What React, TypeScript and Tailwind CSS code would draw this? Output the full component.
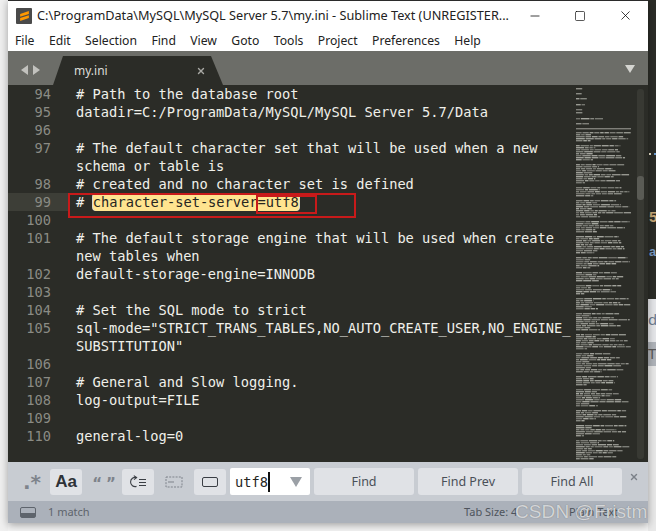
import { Minus, Square, X } from "lucide-react";

const MONO = "font-['DejaVu_Sans_Mono',monospace]";

const lines: { n?: number; text: string }[] = [
  { n: 94, text: "# Path to the database root" },
  { n: 95, text: "datadir=C:/ProgramData/MySQL/MySQL Server 5.7/Data" },
  { n: 96, text: "" },
  { n: 97, text: "# The default character set that will be used when a new" },
  { text: "schema or table is" },
  { n: 98, text: "# created and no character set is defined" },
  { n: 99, text: "#" },
  { n: 100, text: "" },
  { n: 101, text: "# The default storage engine that will be used when create" },
  { text: "new tables when" },
  { n: 102, text: "default-storage-engine=INNODB" },
  { n: 103, text: "" },
  { n: 104, text: "# Set the SQL mode to strict" },
  { n: 105, text: 'sql-mode="STRICT_TRANS_TABLES,NO_AUTO_CREATE_USER,NO_ENGINE_' },
  { text: 'SUBSTITUTION"' },
  { n: 106, text: "" },
  { n: 107, text: "# General and Slow logging." },
  { n: 108, text: "log-output=FILE" },
  { n: 109, text: "" },
  { n: 110, text: "general-log=0" },
];

const menu = ["File", "Edit", "Selection", "Find", "View", "Goto", "Tools", "Project", "Preferences", "Help"];

// minimap is just noise that looks like tiny text blocks
function Minimap() {
  const rects: { x: number; y: number; w: number; o: number }[] = [];
  let seed = 7;
  const rnd = () => {
    seed = (seed * 9301 + 49297) % 233280;
    return seed / 233280;
  };
  const row = (y: number, w: number) => {
    let x = 0;
    while (x < w) {
      const word = 3 + rnd() * 6;
      rects.push({ x, y, w: Math.min(word, w - x), o: 0.45 + rnd() * 0.35 });
      x += word + 0.8;
    }
  };
  // short settings at the top
  [[3, 7], [8, 6], [13, 11], [19, 9], [24, 7], [27, 7], [33, 27], [38, 13]].forEach(([y, w]) => row(y, w));
  rects.push({ x: 0, y: 43, w: 55, o: 0.55 });
  let y = 47;
  while (y < 374) {
    const blockLen = 4 + Math.floor(rnd() * 7);
    for (let k = 0; k < blockLen && y < 374; k++) {
      row(y, k === blockLen - 1 ? 8 + rnd() * 18 : k % 3 === 1 ? 14 + rnd() * 10 : 35 + rnd() * 20);
      y += 2;
    }
    y += 3;
  }
  return (
    <svg width="56" height="375" className="block blur-[0.3px]" aria-hidden="true">
      {rects.map((r, idx) => (
        <rect key={idx} x={r.x} y={r.y} width={r.w} height="1.4" fill="#c4c5bd" opacity={r.o} />
      ))}
    </svg>
  );
}

function ToolBtn({ active, children }: { active?: boolean; children: React.ReactNode }) {
  return (
    <div className={`flex h-[26px] w-[32px] items-center justify-center rounded-[3px] ${active ? "bg-[#e0e2e6]" : ""}`}>
      {children}
    </div>
  );
}

function FindBtn({ label }: { label: string }) {
  return (
    <div className="flex h-[27px] w-[100px] items-center justify-center rounded-[3px] bg-[#e0e2e6] pt-[1px] text-[12.5px] text-[#4a5058]">
      {label}
    </div>
  );
}

export default function App() {
  return (
    <div className="flex h-[531px] w-[656px] overflow-hidden bg-[#f4f4f4] font-['Noto_Sans',sans-serif]">
      <div className="w-[8px] shrink-0 bg-[#f0f0f0]" />

      <div className="relative z-10 flex h-[523px] w-[640px] shrink-0 flex-col border-t border-[#2b2b2b] bg-white shadow-[0_2px_8px_rgba(0,0,0,0.35)]">
        {/* title bar */}
        <div className="flex h-[29px] shrink-0 items-center bg-white">
          <div className="ml-[8px] flex h-[16px] w-[16px] items-center justify-center rounded-[1px] bg-[#4a4a4a]">
            <svg width="11" height="12" viewBox="0 0 10 11">
              <path d="M1 3.6 9 1v2.6L1 6.2zM9 4.8v2.6L1 10V7.4z" fill="#ff9800" />
            </svg>
          </div>
          <span className="ml-[5px] whitespace-nowrap text-[12.7px] text-[#222]">
            C:\ProgramData\MySQL\MySQL Server 5.7\my.ini - Sublime Text (UNREGISTER...
          </span>
          <div className="ml-auto flex items-center">
            <Minus size={14} strokeWidth={1.3} className="mr-[32px] text-black" />
            <Square size={12} strokeWidth={1.3} className="mr-[32px] text-black" />
            <X size={15} strokeWidth={1.2} className="mr-[15px] text-black" />
          </div>
        </div>

        {/* menu */}
        <div className="flex h-[21px] shrink-0 items-center gap-[14.4px] bg-white pl-[7px] pt-[2px] text-[12.2px] text-[#222]">
          {menu.map(m => (
            <span key={m}>{m}</span>
          ))}
        </div>

        {/* tab bar */}
        <div className="relative flex h-[34px] shrink-0 items-end bg-[#6c6d68]">
          <div className="flex h-[30px] w-[45px] items-center justify-center gap-[5px] pb-[1px]">
            <span className="h-0 w-0 border-y-[5px] border-r-[7px] border-y-transparent border-r-[#c2c2be]" />
            <span className="h-0 w-0 border-y-[5px] border-l-[7px] border-y-transparent border-l-[#c2c2be]" />
          </div>
          <div className="flex h-[29px] w-[170px] items-center bg-[#2b2c27] pl-[21px] text-[12px] text-[#dcdcd8] [clip-path:polygon(0_100%,10px_0,158px_0,100%_100%)]">
            <span>my.ini</span>
            <X size={10} strokeWidth={3.2} className="ml-[88px] text-[#a8a8a4]" />
          </div>
          <span className="absolute right-[13px] top-[14px] h-0 w-0 border-x-[5px] border-t-[8px] border-x-transparent border-t-[#d4d4d0]" />
        </div>

        {/* editor */}
        <div className="relative flex h-[377px] shrink-0 overflow-hidden bg-[#2b2c27]">
          <div className={`w-[568px] shrink-0 ${MONO} text-[13.7px] leading-[18px] text-[#f0f0ea]`}>
            {lines.map((l, i) => (
              <div key={i} className={`flex h-[18px] ${l.n === 99 ? "bg-[linear-gradient(90deg,#3d3e37_60px,transparent_60px)]" : ""}`}>
                <span className="w-[43px] shrink-0 text-right text-[#8a8b84]">{l.n ?? ""}</span>
                <span className="ml-[25px] whitespace-pre">{l.text}</span>
                {l.n === 99 && (
                  <span className="ml-[8.5px] h-[18px] rounded-[4px] bg-[#ffe48f] text-[#26261f] shadow-[-1px_0_0_#d8d8d0,1px_0_0_#d8d8d0]">
                    character-set-server=utf8
                  </span>
                )}
              </div>
            ))}
          </div>
          <div className="w-[56px] shrink-0 overflow-hidden">
            <Minimap />
          </div>
          <div className="absolute bottom-[3px] right-[4px] top-[4px] w-[7px] rounded-[3px] bg-[#383933]">
            <div className="absolute left-0 right-0 top-[87px] h-[24px] rounded-[3px] bg-[#5a5b55]" />
          </div>
        </div>

        {/* find panel */}
        <div className="flex h-[39px] shrink-0 items-center bg-[#c8ccd2] pl-[8px] pr-[2px]">
          <ToolBtn>
            <span className="font-['DejaVu_Sans',sans-serif] text-[20px] font-bold leading-none text-[#7e838b]">.*</span>
          </ToolBtn>
          <div className="ml-[2px]">
            <ToolBtn active>
              <span className="font-['Liberation_Sans',sans-serif] text-[17px] font-bold text-[#2e3238]">Aa</span>
            </ToolBtn>
          </div>
          <div className="ml-[8px]">
            <ToolBtn>
              <span className="mt-[5px] font-['DejaVu_Sans',sans-serif] text-[15px] font-bold leading-none tracking-[4px] text-[#7e838b]">“”</span>
            </ToolBtn>
          </div>
          <ToolBtn active>
            <svg width="18" height="14" viewBox="0 0 18 14" fill="none" stroke="#3a3e44" strokeWidth="1.1">
              <path d="M7.5 2.6A4.6 4.6 0 1 0 7.5 11.4" />
              <path d="M4.8.6 7.6 2.6 5 4.6" />
              <path d="M10 4.5h7M10 7.5h7M10 10.5h7" />
            </svg>
          </ToolBtn>
          <div className="ml-[4px]">
            <ToolBtn>
              <svg width="18" height="12" viewBox="0 0 18 12" fill="none" stroke="#7e838b" strokeWidth="1" strokeDasharray="2 1.2">
                <rect x="1" y="1" width="16" height="10" />
                <path d="M3 6h6" strokeDasharray="none" />
              </svg>
            </ToolBtn>
          </div>
          <div className="ml-[4px]">
            <ToolBtn active>
              <span className="h-[10px] w-[16px] rounded-[2px] border border-[#3a3e44]" />
            </ToolBtn>
          </div>
          <div className={`ml-[4px] flex h-[27px] w-[80px] items-center rounded-[2px] bg-white pl-[5px] ${MONO} text-[13.7px] text-[#26261f]`}>
            <span className="border-r-2 border-[#101010] leading-[20px]">utf8</span>
            <span className="ml-auto mr-[8px] h-0 w-0 border-x-[6px] border-t-[10px] border-x-transparent border-t-[#9ba0a6]" />
          </div>
          <div className="ml-[4px] flex gap-[4px]">
            <FindBtn label="Find" />
            <FindBtn label="Find Prev" />
            <FindBtn label="Find All" />
          </div>
          <X size={10} strokeWidth={3.4} className="ml-[7px] mt-[-10px] text-[#7b8088]" />
        </div>

        {/* status bar */}
        <div className="relative flex h-[22px] shrink-0 items-center bg-[#abb1ba] pl-[12px] text-[11px] text-[#5e646c]">
          <div className="h-[11px] w-[16px] rounded-[2px] border border-[#5e646c] bg-[linear-gradient(180deg,transparent_60%,#5e646c_60%)]" />
          <span className="ml-[12px]">1 match</span>
          <span className="absolute left-[456px] text-[#4e545c]">Tab Size: 4</span>
          <span className="absolute left-[561px] text-[#4e545c]">Plain Text</span>
          <span className="absolute left-[507px] top-[-3px] whitespace-nowrap font-['Liberation_Sans',sans-serif] text-[19px] tracking-[0.1px] text-[#e4e6e8]/85 [text-shadow:0_0_1px_rgba(70,70,70,0.6)]">
            CSDN @Fristm
          </span>
        </div>

        {/* red annotation boxes */}
        <div className="absolute left-[60px] top-[192px] h-[25px] w-[288px] border-2 border-[#c81a1a]" />
        <div className="absolute left-[248px] top-[194px] h-[19px] w-[61px] border-2 border-[#c81a1a]" />
      </div>

      {/* what shows behind the window */}
      <div className="flex flex-1 flex-col overflow-hidden">
        <div className="h-[299px] bg-[#2b2c27] pl-[1px] font-['Liberation_Sans',sans-serif] font-bold">
          <div className="mt-[153px] flex h-[2px] gap-[3px]">
            <span className="h-[2px] w-[3px] bg-[#e8e0c8]" />
            <span className="h-[2px] w-[3px] bg-[#6a9ad0]" />
          </div>
          <div className="mt-[54px] h-[16px] overflow-hidden whitespace-nowrap text-[15px] leading-[16px] text-[#c8a878]">50</div>
          <div className="mt-[20px] h-[14px] text-[13px] leading-[14px] text-[#7a9ac0]">a</div>
        </div>
        <div className="h-[43px] bg-[#e6e7ea] pt-[12px] text-[15px] leading-[16px] text-[#6a7a90]">d</div>
        <div className="h-[24px] bg-[#b0b4ba] pt-[3px] text-[15px] leading-[16px] text-[#5a5a5a]">T</div>
        <div className="flex-1 bg-[#e9e9e9]" />
      </div>
    </div>
  );
}
